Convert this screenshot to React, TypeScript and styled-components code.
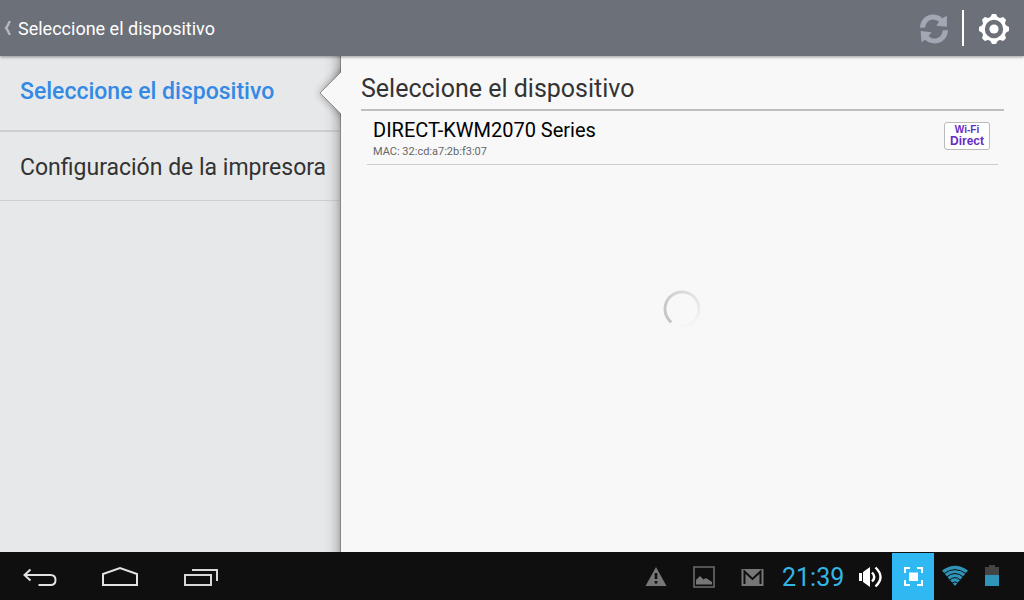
import React from 'react';
import styled, { createGlobalStyle } from 'styled-components';

const GlobalStyle = createGlobalStyle`
  * { box-sizing: border-box; }
  body { margin: 0; font-family: Roboto, "Liberation Sans", sans-serif; }
  button { border: 0; padding: 0; background: none; color: inherit; font: inherit; cursor: pointer; }
  svg { display: block; }
`;

const Screen = styled.div`
  display: flex;
  flex-direction: column;
  min-height: 100vh;
`;

const TopBar = styled.header`
  position: relative;
  z-index: 2;
  display: flex;
  align-items: center;
  justify-content: space-between;
  height: 56px;
  padding: 2px 14px 0 4px;
  background: #6c7079;
  color: #fff;
  box-shadow: 0 1px 3px rgba(0, 0, 0, 0.4);
`;

const BackButton = styled.button`
  && {
    display: flex;
    align-items: center;
    gap: 6px;
    font-size: 18px;
    line-height: 24px;
  }
`;

const Actions = styled.div`
  display: flex;
  align-items: center;
  gap: 14px;
`;

const Divider = styled.span`
  width: 2px;
  height: 36px;
  margin-bottom: 2px;
  background: #fff;
`;

const Content = styled.div`
  display: flex;
  flex: 1;
`;

const Sidebar = styled.nav`
  position: relative;
  width: 341px;
  flex-shrink: 0;
  background: linear-gradient(to left, #858687 0, #858687 1px, #b0b1b2 1px, #cbcccd 5px, #e0e1e2 11px, #e7e8ea 18px);
`;

const SideItem = styled.button<{ $active?: boolean }>`
  && {
    display: block;
    width: 100%;
    height: ${(p) => (p.$active ? 76 : 69)}px;
    padding: ${(p) => (p.$active ? '0 0 2px 20px' : '4px 0 0 20px')};
    border-bottom: ${(p) => (p.$active ? 2 : 1)}px solid rgba(150, 150, 150, 0.3);
    text-align: left;
    white-space: nowrap;
    font-size: 23px;
    line-height: 32px;
    font-weight: ${(p) => (p.$active ? 500 : 400)};
    color: ${(p) => (p.$active ? '#338ae5' : '#333')};
  }
`;

const Pointer = styled.svg`
  position: absolute;
  top: 0;
  right: 0;
`;

const Panel = styled.main`
  flex: 1;
  min-width: 0;
  padding: 17px 20px 0;
  background: #f8f8f8;
`;

const PanelTitle = styled.h1`
  margin: 0;
  padding-bottom: 4px;
  border-bottom: 2px solid #bfbfbf;
  font-size: 25px;
  line-height: 32px;
  font-weight: 400;
  color: #333;
`;

const DeviceList = styled.ul`
  margin: 0;
  padding: 0 6px;
  list-style: none;
`;

const DeviceRow = styled.button`
  && {
    display: flex;
    align-items: flex-start;
    justify-content: space-between;
    width: 100%;
    height: 54px;
    padding: 7px 8px 0 6px;
    border-bottom: 1px solid #ccc;
    text-align: left;
  }
`;

const DeviceName = styled.div`
  font-size: 20px;
  line-height: 24px;
  color: #000;
`;

const DeviceMac = styled.div`
  padding-top: 2px;
  font-size: 11px;
  line-height: 16px;
  color: #666;
`;

const Badge = styled.span`
  display: flex;
  flex-direction: column;
  align-items: center;
  justify-content: center;
  width: 46px;
  height: 28px;
  margin-top: 4px;
  border: 1px solid #bbb;
  border-radius: 3px;
  background: #fff;
  color: #652bc4;
  font-family: "Liberation Sans", Arial, sans-serif;
  font-weight: 700;
`;

const BadgeText = styled.span<{ $large?: boolean }>`
  font-size: ${(p) => (p.$large ? 12 : 10)}px;
  line-height: ${(p) => (p.$large ? 12 : 10)}px;
`;

const Loading = styled.div`
  display: flex;
  justify-content: center;
  padding: 125px 2px 0 0;
`;

const Spinner = styled.div`
  width: 38px;
  height: 38px;
  border-radius: 50%;
  background: conic-gradient(from 218deg, #c4c4c4, #c9c9c9 20%, #dedede 45%, #f3f3f3 75%, #f8f8f8);
  mask: radial-gradient(circle, transparent 15px, #000 16px, #000 18px, transparent 19px);
`;

const SystemBar = styled.footer`
  display: flex;
  align-items: center;
  justify-content: space-between;
  height: 48px;
  padding: 0 25px 0 22px;
  background: #0f0f0f;
`;

const NavKeys = styled.div`
  display: flex;
  align-items: center;
  gap: 44px;
  padding-top: 2px;
`;

const Status = styled.div`
  display: flex;
  align-items: center;
  height: 100%;
`;

const Notices = styled.div`
  display: flex;
  align-items: center;
  gap: 24px;
  padding: 2px 18px 0 0;
`;

const Clock = styled.time`
  width: 76px;
  font-size: 25px;
  line-height: 32px;
  padding-top: 4px;
  color: #33b5e5;
`;

const CaptureButton = styled.button`
  && {
    display: flex;
    align-items: center;
    justify-content: center;
    align-self: flex-end;
    width: 42px;
    height: 47px;
    margin: 0 8px;
    background: #2fb8f1;
  }
`;

const Indicators = styled.div`
  display: flex;
  align-items: center;
  gap: 17px;
`;

const teeth = [0, 45, 90, 135, 180, 225, 270, 315];

export default function App() {
  return (
    <Screen>
      <GlobalStyle />
      <TopBar>
        <BackButton>
          <svg width="8" height="16" viewBox="0 0 8 16" fill="#b4b6ba">
            <path d="M4.5 0 H7 Q5.6 4 3.6 7 Q5.6 10 7 14 H4.5 Q3 10 0.5 7 Q3 4 4.5 0 Z" />
          </svg>
          Seleccione el dispositivo
        </BackButton>
        <Actions>
          <button aria-label="Actualizar">
            <svg width="30" height="32" viewBox="0 0 30 32" fill="#a2a7b4">
              <path d="M2 14.8 C2.4 6.8 8.2 1.6 15 1.6 C18.8 1.6 21.9 3 24.3 5.2 L28.9 2.8 V13.8 L18.1 12.7 L21 9 C19.4 7.3 17.6 6.4 15.2 6.4 C11 6.4 7.8 9.6 7.2 14.4 Z" />
              <path d="M30 17.2 C29.6 25.2 23.8 30.4 16.5 30.4 C12.7 30.4 9.6 29 7.2 26.8 L3.6 29.2 L2.6 18 L13.6 19.2 L10.6 23 C12.2 24.7 14 25.6 16.4 25.6 C20.8 25.6 24.2 22.4 24.8 17.2 Z" />
            </svg>
          </button>
          <Divider />
          <button aria-label="Ajustes">
            <svg width="32" height="32" viewBox="-16 -16 32 32">
              <circle r="10.8" fill="none" stroke="#fff" strokeWidth="3.2" />
              <g fill="#fff">
                {teeth.map((angle) => (
                  <path key={angle} transform={`rotate(${angle})`} d="M-4.2 -10.8 L-2 -15 H2 L4.2 -10.8 Z" />
                ))}
                <circle r="4.6" />
              </g>
            </svg>
          </button>
        </Actions>
      </TopBar>

      <Content>
        <Sidebar>
          <SideItem $active>Seleccione el dispositivo</SideItem>
          <SideItem>Configuración de la impresora</SideItem>
          <Pointer width="50" height="74" viewBox="0 0 50 74">
            <defs>
              <filter id="pointer-shadow" x="-40%" y="-40%" width="180%" height="180%">
                <feGaussianBlur stdDeviation="4" />
              </filter>
            </defs>
            <path d="M56 10 L29 37 L56 64 Z" fill="#000" opacity="0.4" filter="url(#pointer-shadow)" />
            <path d="M50 16 L29 37 L50 58 Z" fill="#f8f8f8" />
            <path d="M50 16 L29 37 L50 58" fill="none" stroke="#8c8c8c" />
          </Pointer>
        </Sidebar>
        <Panel>
          <PanelTitle>Seleccione el dispositivo</PanelTitle>
          <DeviceList>
            <li>
              <DeviceRow>
                <span>
                  <DeviceName>DIRECT-KWM2070 Series</DeviceName>
                  <DeviceMac>MAC: 32:cd:a7:2b:f3:07</DeviceMac>
                </span>
                <Badge>
                  <BadgeText>Wi-Fi</BadgeText>
                  <BadgeText $large>Direct</BadgeText>
                </Badge>
              </DeviceRow>
            </li>
          </DeviceList>
          <Loading>
            <Spinner role="status" aria-label="Buscando" />
          </Loading>
        </Panel>
      </Content>

      <SystemBar>
        <NavKeys>
          <button aria-label="Atrás">
            <svg width="36" height="24" viewBox="0 0 36 24" fill="none" stroke="#e2e2e2" strokeWidth="2">
              <path d="M8.5 4.5 L2.5 10 L8.5 15.5 M3 10 H28.5 C32 10 33.5 12.5 33.5 15 C33.5 17.5 32 20 28.5 20 H16.5" />
            </svg>
          </button>
          <button aria-label="Inicio">
            <svg width="36" height="24" viewBox="0 0 36 24" fill="none" stroke="#e2e2e2" strokeWidth="2">
              <path d="M1 20 V9 L18 3 L35 9 V20 Z" />
            </svg>
          </button>
          <button aria-label="Recientes">
            <svg width="36" height="24" viewBox="0 0 36 24" fill="none" stroke="#d8d8d8" strokeWidth="2">
              <path d="M3 10 H29 V20 H3 Z M10 5 H35 V16" />
            </svg>
          </button>
        </NavKeys>
        <Status>
          <Notices>
            <svg width="24" height="24" viewBox="0 0 24 24">
              <path d="M12 2 L22.5 21 H1.5 Z" fill="#777" />
              <path d="M12 8 V14 M12 16 V18.5" stroke="#0f0f0f" strokeWidth="2.6" />
            </svg>
            <svg width="24" height="24" viewBox="0 0 24 24">
              <path d="M2 2 H22 V22 H2 Z" fill="none" stroke="#6c6c6c" strokeWidth="1.6" />
              <path d="M4 19.5 V15 L8 11 L11.5 14.5 L14 13 L20 17 V19.5 Z" fill="#777" />
            </svg>
            <svg width="24" height="24" viewBox="0 0 24 24">
              <path d="M1.5 4 H23.5 V21 H1.5 Z" fill="#777" />
              <path d="M4.5 19 V6.5 L12.5 14 L20.5 6.5 V19" fill="none" stroke="#0f0f0f" strokeWidth="2" />
            </svg>
          </Notices>
          <Clock>21:39</Clock>
          <svg width="26" height="26" viewBox="0 0 26 26">
            <path d="M1 10 H4 V18 H1 Z M5 9 L12 4 V24 L5 19 Z" fill="#fff" />
            <path d="M14 9.5 Q18.5 14 14 18.5 M17.5 4.5 Q27.5 14 17.5 23.5" fill="none" stroke="#fff" strokeWidth="2.4" />
          </svg>
          <CaptureButton aria-label="Captura de pantalla">
            <svg width="20" height="20" viewBox="0 0 20 20">
              <path d="M6 5.5 H15 V14 H6 Z" fill="#fff" />
              <path d="M2 6 V1 H7 M14 1 H19 V6 M19 13 V18 H14 M7 18 H2 V13" fill="none" stroke="#fff" strokeWidth="2" />
            </svg>
          </CaptureButton>
          <Indicators>
            <svg width="26" height="22" viewBox="0 0 26 22">
              <path d="M0 5.5 Q13 -4 26 5.5 L13 21 Z" fill="#3093b8" />
              <path d="M2 8.6 Q13 0.6 24 8.6 M4.5 12 Q13 5 21.5 12 M7.5 15.2 Q13 10 18.5 15.2 M10 18.2 Q13 15.4 16 18.2" fill="none" stroke="#0f0f0f" strokeWidth="1" />
            </svg>
            <svg width="14" height="22" viewBox="0 0 14 22">
              <path d="M4 0 H10 V2 H14 V10 H0 V2 H4 Z" fill="#444" />
              <path d="M0 10 H14 V21 H0 Z" fill="#3093b8" />
            </svg>
          </Indicators>
        </Status>
      </SystemBar>
    </Screen>
  );
}
